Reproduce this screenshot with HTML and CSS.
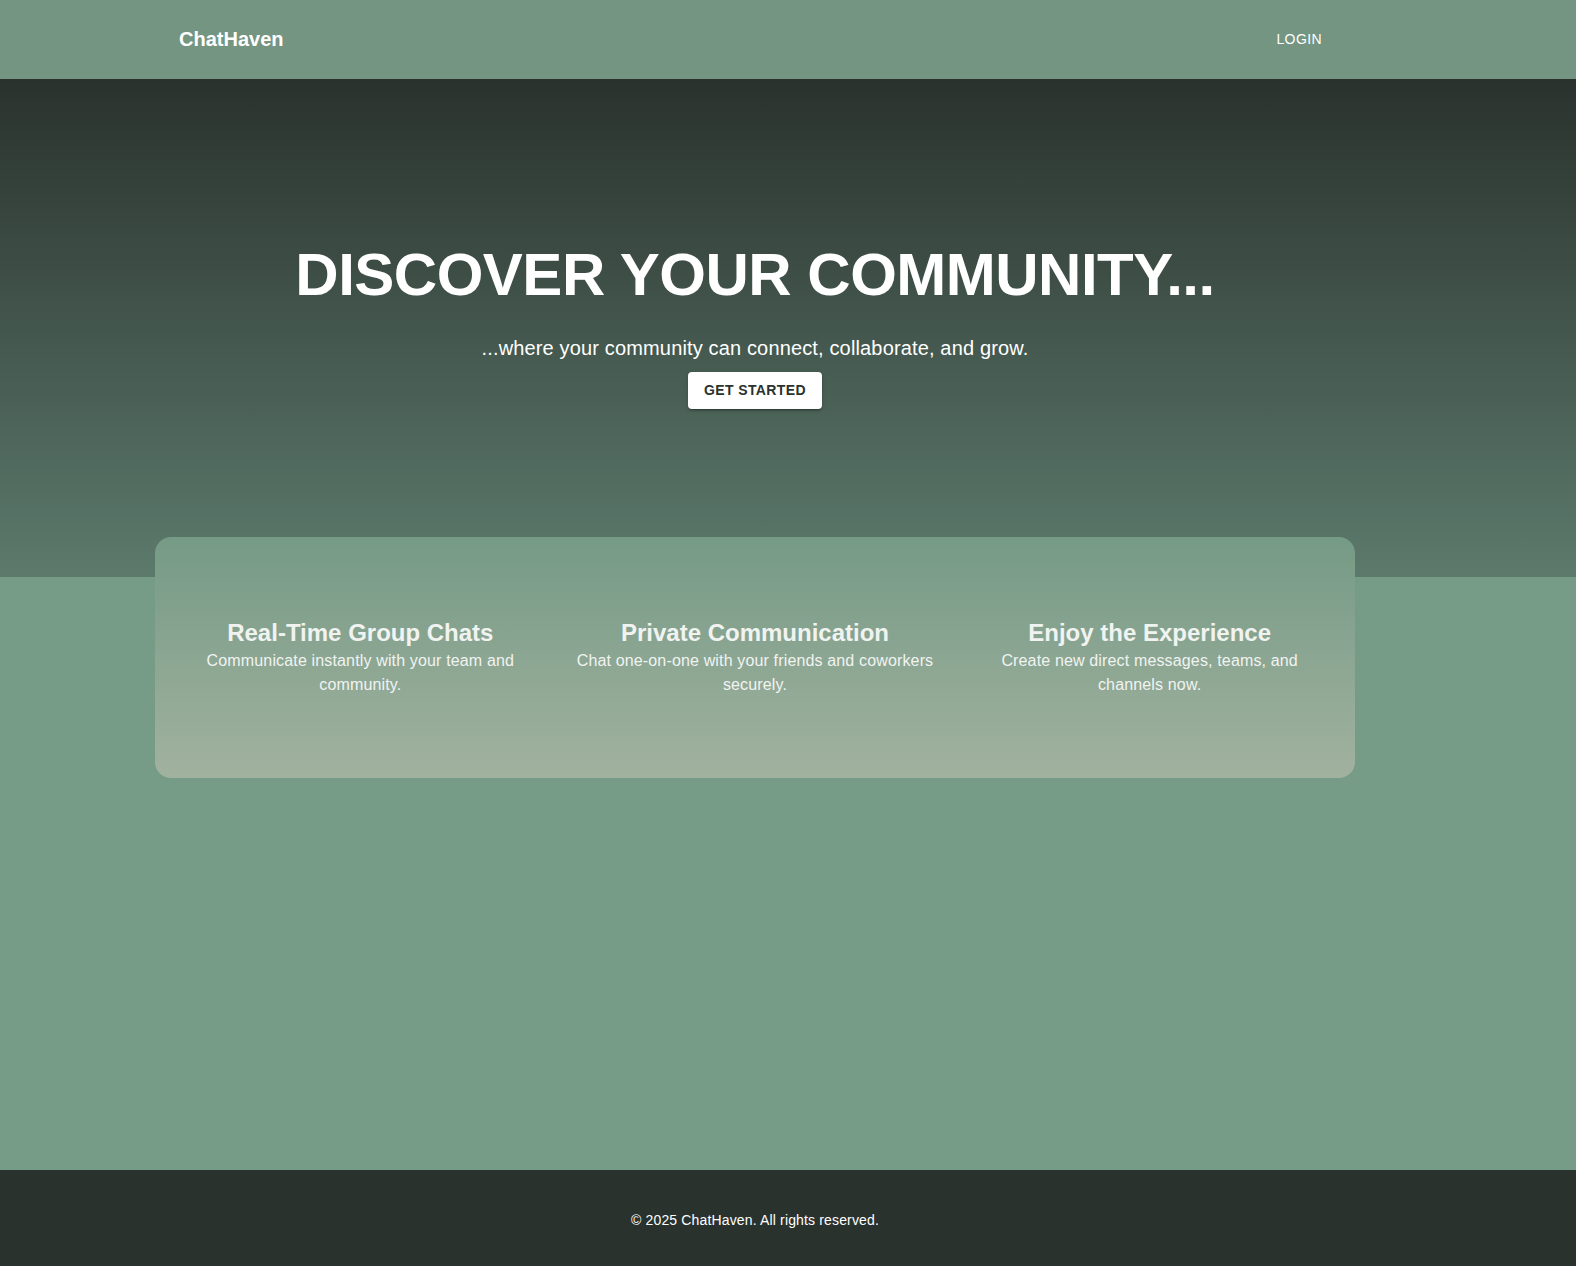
FILE: index.html
```html
<!DOCTYPE html>
<html lang="en">
<head>
<meta charset="utf-8">
<title>ChatHaven</title>
<link rel="stylesheet" href="styles.css">
</head>
<body>
<div class="page">
  <header class="navbar">
    <div class="frame">
      <div class="container nav-inner">
        <span class="logo">ChatHaven</span>
        <a class="login" href="#">Login</a>
      </div>
    </div>
  </header>

  <section class="hero">
    <div class="frame">
      <div class="container hero-inner">
        <h1 class="hero-title">DISCOVER YOUR COMMUNITY...</h1>
        <p class="hero-sub">...where your community can connect, collaborate, and grow.</p>
        <a class="btn-start" href="#">Get Started</a>
      </div>
    </div>
  </section>

  <main class="main">
    <div class="frame">
      <div class="container">
        <div class="features">
          <div class="feature">
            <h2 class="feature-title">Real-Time Group Chats</h2>
            <p class="feature-text">Communicate instantly with your team and community.</p>
          </div>
          <div class="feature">
            <h2 class="feature-title">Private Communication</h2>
            <p class="feature-text">Chat one-on-one with your friends and coworkers securely.</p>
          </div>
          <div class="feature">
            <h2 class="feature-title">Enjoy the Experience</h2>
            <p class="feature-text">Create new direct messages, teams, and channels now.</p>
          </div>
        </div>
      </div>
    </div>
  </main>

  <footer class="footer">
    <div class="frame">
      <p class="footer-text">© 2025 ChatHaven. All rights reserved.</p>
    </div>
  </footer>
</div>
</body>
</html>
```

FILE: styles.css
```css
* { box-sizing: border-box; }

html, body {
  margin: 0;
  padding: 0;
}

body {
  font-family: "Liberation Sans", Arial, sans-serif;
  background: #769c87;
  color: #ffffff;
}

.page {
  min-height: 100vh;
  display: flex;
  flex-direction: column;
}

.frame {
  padding-right: 66px;
}

.container {
  width: 1200px;
  margin: 0 auto;
  padding: 0 24px;
}

/* Navbar */
.navbar {
  background: #739582;
  height: 79px;
}

.nav-inner {
  height: 79px;
  display: flex;
  align-items: center;
  justify-content: space-between;
}

.logo {
  font-size: 20px;
  font-weight: 700;
  line-height: 32px;
  margin-bottom: 2px;
  color: #ffffff;
}

.login {
  color: #ffffff;
  text-decoration: none;
  text-transform: uppercase;
  font-size: 14px;
  letter-spacing: 0.4px;
  line-height: 24.5px;
  padding: 6px 9px 6px 8px;
}

/* Hero */
.hero {
  height: 498px;
  padding-top: 160px;
  background: linear-gradient(to bottom, #2a322e 0%, #5c7a6c 100%);
}

.hero-inner {
  display: flex;
  flex-direction: column;
  align-items: center;
  text-align: center;
}

.hero-title {
  margin: 0 0 21px;
  font-size: 60px;
  line-height: 72px;
  font-weight: 700;
  letter-spacing: -0.5px;
  color: #ffffff;
}

.hero-sub {
  margin: 0;
  font-size: 20px;
  line-height: 32px;
  letter-spacing: 0.15px;
  color: #ffffff;
}

.btn-start {
  margin-top: 8px;
  display: inline-block;
  background: #ffffff;
  color: #2a322e;
  text-decoration: none;
  text-transform: uppercase;
  font-size: 14px;
  font-weight: 700;
  letter-spacing: 0.4px;
  line-height: 24.5px;
  padding: 6px 16px;
  border-radius: 4px;
  box-shadow: 0 3px 1px -2px rgba(0,0,0,0.2), 0 2px 2px 0 rgba(0,0,0,0.14), 0 1px 5px 0 rgba(0,0,0,0.12);
}

/* Main / features */
.main {
  flex: 1;
}

.features {
  position: relative;
  margin: -40px -24px 0;
  padding: 80px 8px 81px;
  border-radius: 16px;
  background: linear-gradient(to bottom, #759a85 0%, #a1b29f 100%);
  display: grid;
  grid-template-columns: repeat(3, 1fr);
}

.feature {
  padding: 0 16px;
  text-align: center;
  color: #f1f3f1;
}

.feature-title {
  margin: 0;
  font-size: 24px;
  line-height: 32px;
  font-weight: 700;
}

.feature-text {
  margin: 0;
  font-size: 16px;
  line-height: 24px;
  letter-spacing: 0.15px;
}

/* Footer */
.footer {
  background: #2a322e;
  height: 96px;
  padding-top: 40px;
  text-align: center;
}

.footer-text {
  margin: 0;
  font-size: 14px;
  line-height: 20px;
  letter-spacing: 0.15px;
  color: #ffffff;
}
```
